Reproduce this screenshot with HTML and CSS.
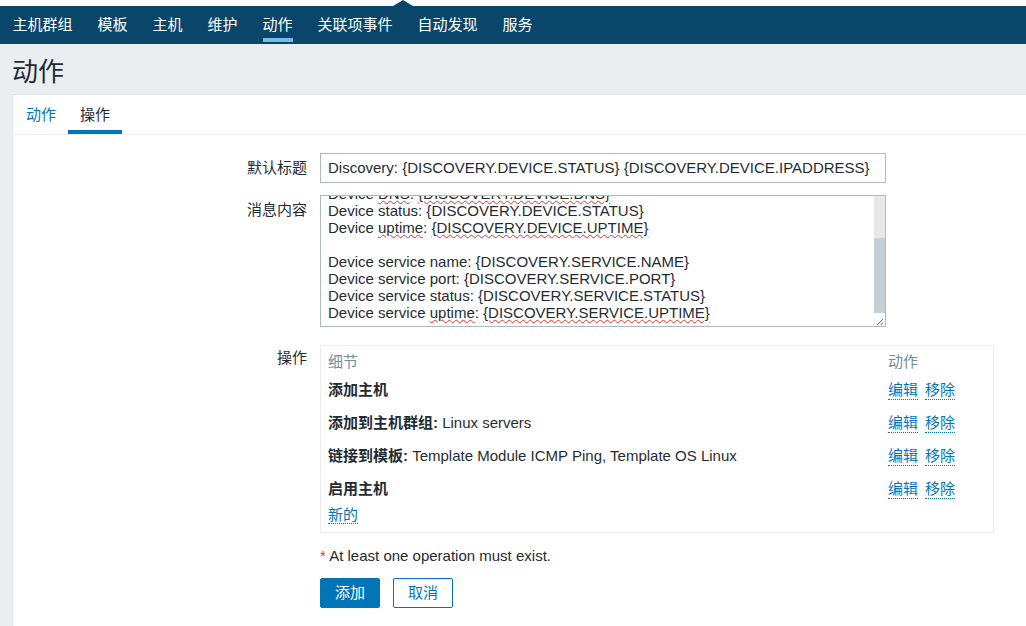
FILE: index.html
```html
<!DOCTYPE html>
<html lang="zh-CN">
<head>
<meta charset="utf-8">
<title>动作</title>
<link rel="stylesheet" href="styles.css">
</head>
<body>
<header class="topbar">
  <span class="notch"></span>
  <nav class="menu">
    <a class="menu-item"><span>主机群组</span></a>
    <a class="menu-item"><span>模板</span></a>
    <a class="menu-item"><span>主机</span></a>
    <a class="menu-item"><span>维护</span></a>
    <a class="menu-item active"><span>动作</span></a>
    <a class="menu-item"><span>关联项事件</span></a>
    <a class="menu-item"><span>自动发现</span></a>
    <a class="menu-item"><span>服务</span></a>
  </nav>
</header>
<main class="page">
  <div class="page-title"><h1>动作</h1></div>
  <section class="panel">
    <div class="tabs">
      <a class="tab">动作</a>
      <a class="tab active">操作</a>
    </div>
    <div class="form">
      <div class="row">
        <div class="label">默认标题</div>
        <div class="input">Discovery: {DISCOVERY.DEVICE.STATUS} {DISCOVERY.DEVICE.IPADDRESS}</div>
      </div>
      <div class="row row-ta">
        <div class="label">消息内容</div>
        <div class="textarea">
          <div class="ta-view">
            <div class="ta-content">
              <div class="ta-line">Discovery rule: {DISCOVERY.RULE.NAME}</div>
              <div class="ta-line">&nbsp;</div>
              <div class="ta-line">Device IP:<span class="sp">{DISCOVERY.DEVICE.IPADDRESS}</span></div>
              <div class="ta-line">Device <span class="sp">DNS</span>: <span class="sp">{DISCOVERY.DEVICE.DNS}</span></div>
              <div class="ta-line">Device status: {DISCOVERY.DEVICE.STATUS}</div>
              <div class="ta-line">Device <span class="sp">uptime</span>: <span class="sp">{DISCOVERY.DEVICE.UPTIME}</span></div>
              <div class="ta-line">&nbsp;</div>
              <div class="ta-line">Device service name: {DISCOVERY.SERVICE.NAME}</div>
              <div class="ta-line">Device service port: {DISCOVERY.SERVICE.PORT}</div>
              <div class="ta-line">Device service status: {DISCOVERY.SERVICE.STATUS}</div>
              <div class="ta-line">Device service <span class="sp">uptime</span>: <span class="sp">{DISCOVERY.SERVICE.UPTIME}</span></div>
            </div>
          </div>
          <div class="ta-scroll">
            <div class="ta-track"><div class="ta-thumb"></div></div>
            <div class="ta-grip">
              <svg width="11" height="13" viewBox="0 0 11 13"><path d="M9 6 L3 12 M9 9.5 L6.5 12" stroke="#6b6b6b" stroke-width="1" fill="none"/></svg>
            </div>
          </div>
        </div>
      </div>
      <div class="row row-ops">
        <div class="label label-ops">操作</div>
        <div class="ops">
          <div class="ops-head"><span>细节</span><span>动作</span></div>
          <div class="ops-row"><div><b>添加主机</b></div><div class="ops-actions"><a class="link">编辑</a><a class="link">移除</a></div></div>
          <div class="ops-row"><div><b>添加到主机群组:</b> Linux servers</div><div class="ops-actions"><a class="link">编辑</a><a class="link">移除</a></div></div>
          <div class="ops-row"><div><b>链接到模板:</b> Template Module ICMP Ping, Template OS Linux</div><div class="ops-actions"><a class="link">编辑</a><a class="link">移除</a></div></div>
          <div class="ops-row"><div><b>启用主机</b></div><div class="ops-actions"><a class="link">编辑</a><a class="link">移除</a></div></div>
          <div class="ops-new"><a class="link">新的</a></div>
        </div>
      </div>
      <div class="row row-note">
        <div class="label"></div>
        <div class="note"><span class="req">*</span> At least one operation must exist.</div>
      </div>
      <div class="row row-buttons">
        <div class="label"></div>
        <div class="buttons">
          <button class="btn btn-primary">添加</button>
          <button class="btn btn-alt">取消</button>
        </div>
      </div>
    </div>
  </section>
</main>
</body>
</html>
```
FILE: styles.css
```css
* { box-sizing: border-box; }
html, body { margin: 0; padding: 0; }
body {
  font-family: "Liberation Sans", "Noto Sans CJK SC", sans-serif;
  font-size: 15px;
  color: #1f2c33;
  background: #ebeef0;
  overflow: hidden;
  height: 626px;
}
.topbar {
  position: relative;
  background: #ffffff;
  padding-top: 6px;
}
.notch {
  position: absolute;
  left: 393px;
  top: 0;
  width: 0;
  height: 0;
  border-left: 10px solid transparent;
  border-right: 10px solid transparent;
  border-bottom: 6px solid #0a466a;
}
.menu {
  display: flex;
  background: #0a466a;
  height: 38px;
}
.menu-item {
  display: block;
  padding: 10px 12.5px 0;
  color: #ffffff;
}
.menu-item span {
  display: block;
  height: 26px;
  line-height: 18px;
  padding-bottom: 4px;
  border-bottom: 4px solid transparent;
}
.menu-item.active span { border-bottom-color: #76bbea; }

.page { display: flex; flex-direction: column; height: 582px; }
.page-title {
  height: 50px;
  padding: 6px 12px 0;
  display: flex;
  align-items: center;
}
.page-title h1 {
  margin: 0;
  font-size: 26px;
  font-weight: normal;
  line-height: 34px;
  color: #1f2c33;
}
.panel {
  flex: 1;
  margin-left: 12px;
  background: #ffffff;
  border-top: 1px solid #dfe4e7;
  border-left: 1px solid #dfe4e7;
}
.tabs {
  display: flex;
  padding-left: 1px;
  border-bottom: 1px solid #ebeef0;
}
.tab {
  display: block;
  height: 39px;
  padding: 11px 12px 6px;
  line-height: 18px;
  color: #0275b8;
  border-bottom: 4px solid transparent;
}
.tab.active {
  color: #1f2c33;
  border-bottom-color: #0275b8;
}
.form {
  padding-top: 18px;
  display: flex;
  flex-direction: column;
}
.row {
  display: grid;
  grid-template-columns: 294px 1fr;
  column-gap: 13px;
}
.row-ta { margin-top: 12px; }
.row-ops { margin-top: 18px; }
.row-note { margin-top: 14px; }
.row-buttons { margin-top: 13px; }
.label {
  text-align: right;
  line-height: 18px;
  padding-top: 6px;
}
.label-ops { padding-top: 4px; }
.input {
  width: 566px;
  height: 30px;
  border: 1px solid #acbbc2;
  padding: 0 7px;
  line-height: 28px;
  white-space: nowrap;
  overflow: hidden;
}
.textarea {
  width: 566px;
  height: 132px;
  border: 1px solid #acbbc2;
  display: flex;
}
.ta-view {
  flex: 1;
  overflow: hidden;
  padding-left: 7px;
}
.ta-content { margin-top: -62px; }
.ta-line {
  height: 17px;
  line-height: 17px;
  white-space: pre;
}
.sp {
  text-decoration: underline wavy #e3302c;
  text-decoration-thickness: 1px;
  text-underline-offset: 1px;
}
.ta-scroll {
  width: 11px;
  display: flex;
  flex-direction: column;
}
.ta-track {
  flex: 1;
  background: #e8e8e8;
  display: flex;
  flex-direction: column;
  justify-content: flex-end;
}
.ta-thumb {
  height: 75px;
  background: #c5cfd4;
}
.ta-grip {
  height: 13px;
  background: #ffffff;
  display: flex;
}
.ops {
  width: 674px;
  border: 1px solid #ebeef0;
  padding-bottom: 8px;
}
.ops-head, .ops-row {
  display: grid;
  grid-template-columns: 560px 1fr;
  padding: 0 7px;
}
.ops-head {
  color: #768d99;
  height: 27px;
  padding-top: 7px;
  line-height: 18px;
}
.ops-row {
  height: 33px;
  line-height: 18px;
  padding-top: 7.5px;
}
.ops-row b { font-weight: bold; }
.ops-actions { display: flex; gap: 7px; align-items: flex-start; }
.ops-new {
  height: 19px;
  padding: 1px 7px 0;
  line-height: 18px;
}
.link {
  color: #0275b8;
  border-bottom: 1px dotted #0275b8;
  cursor: pointer;
}
.note { height: 18px; line-height: 18px; }
.req { color: #e33734; }
.buttons { display: flex; gap: 13px; }
.btn {
  font-family: "Liberation Sans", "Noto Sans CJK SC", sans-serif;
  font-size: 15px;
  height: 30px;
  width: 60px;
  padding: 0;
  border-radius: 2px;
  border: 1px solid #0275b8;
  line-height: 28px;
}
.btn-primary { background: #0275b8; color: #ffffff; }
.btn-alt { background: #ffffff; color: #0275b8; }
```
